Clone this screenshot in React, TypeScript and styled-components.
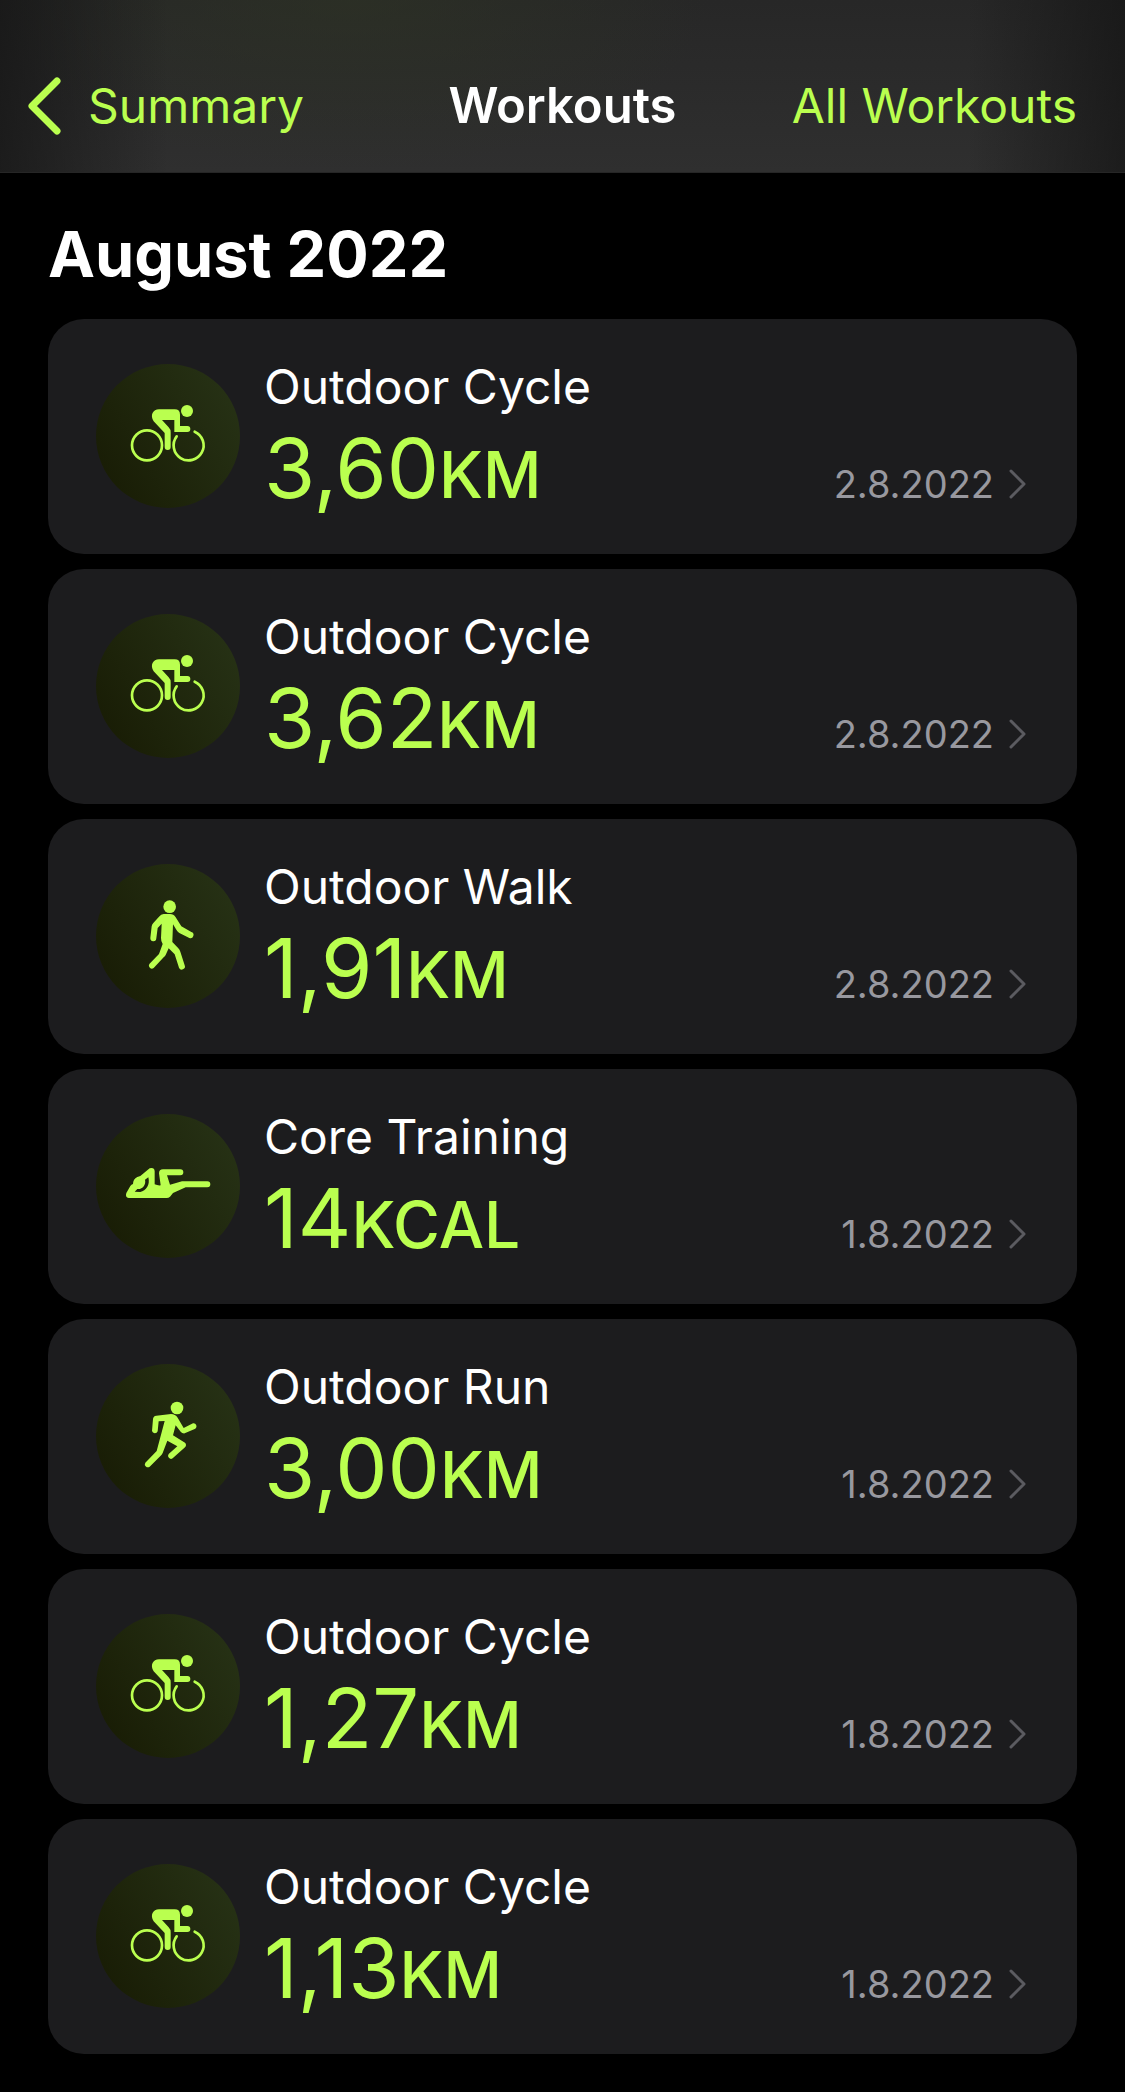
import React from "react";
import styled, { createGlobalStyle } from "styled-components";

const LIME = "#baff4f";

const GlobalStyle = createGlobalStyle`
  * {
    box-sizing: border-box;
  }
  body {
    margin: 0;
    background: #000;
    color: #fff;
    font-family: Inter, "Liberation Sans", sans-serif;
  }
`;

const NavBar = styled.header`
  display: grid;
  grid-template-columns: 1fr auto 1fr;
  align-items: center;
  padding: 74px 28px 34px;
  border-bottom: 1px solid #262626;
  background:
    linear-gradient(90deg, rgba(20, 20, 20, 0.7), rgba(20, 20, 20, 0) 15%, rgba(20, 20, 20, 0) 86%, rgba(20, 20, 20, 0.7)),
    radial-gradient(ellipse 360px 170px at 31% 0, rgba(46, 52, 36, 0.6), rgba(46, 52, 36, 0)),
    linear-gradient(180deg, #272727, #2f2f2f);
`;

const NavButton = styled.button<{ $end?: boolean }>`
  display: flex;
  align-items: center;
  justify-self: ${(p) => (p.$end ? "end" : "start")};
  gap: 26px;
  padding: ${(p) => (p.$end ? "0 20px 0 0" : "0")};
  border: 0;
  background: none;
  color: ${LIME};
  font: inherit;
  font-size: 48px;
  line-height: 64px;
  white-space: nowrap;
  cursor: pointer;
`;

const NavTitle = styled.h1`
  margin: 0;
  font-size: 49px;
  line-height: 64px;
  font-weight: 600;
`;

const Content = styled.main`
  padding: 40px 48px 38px;
`;

const MonthTitle = styled.h2`
  margin: 0 0 24px;
  font-size: 63px;
  line-height: 82px;
  font-weight: 700;
`;

const WorkoutList = styled.ul`
  display: flex;
  flex-direction: column;
  gap: 15px;
  margin: 0;
  padding: 0;
  list-style: none;
`;

const Card = styled.a`
  display: grid;
  grid-template-columns: auto 1fr auto;
  align-items: center;
  column-gap: 24px;
  padding: 32px 50px 33px 48px;
  border-radius: 36px;
  background: #1c1c1e;
  color: inherit;
  text-decoration: none;
`;

const Badge = styled.span`
  display: block;
  width: 144px;
  height: 144px;
  border-radius: 50%;
  background: linear-gradient(60deg, #171a03, #283417);
  color: ${LIME};

  svg {
    display: block;
    width: 100%;
    height: 100%;
  }
`;

const Details = styled.span`
  display: flex;
  flex-direction: column;
  height: 170px;
`;

const Name = styled.span`
  font-size: 48px;
  line-height: 72px;
`;

const Value = styled.span`
  color: ${LIME};
  font-size: 83px;
  line-height: 90px;
`;

const Unit = styled.span`
  font-size: 64px;
  font-weight: 500;
`;

const Meta = styled.span`
  display: flex;
  align-items: center;
  align-self: end;
  gap: 15px;
  padding-bottom: 13px;
  color: #98989f;
  font-size: 38px;
  line-height: 48px;
`;

const BackChevron = () => (
  <svg width="34" height="58" viewBox="0 0 34 58" fill="none" stroke="currentColor" strokeWidth="7" strokeLinecap="round" strokeLinejoin="round" aria-hidden="true">
    <path d="M29 4 4 29l25 25" />
  </svg>
);

const RowChevron = () => (
  <svg width="18" height="30" viewBox="0 0 18 30" fill="none" stroke="#5b5b60" strokeWidth="3" strokeLinecap="round" strokeLinejoin="round" aria-hidden="true">
    <path d="m2 2 13 13L2 28" />
  </svg>
);

const Glyph = ({ children }: { children: React.ReactNode }) => (
  <svg viewBox="18 12 432 432" fill="none" stroke="currentColor" strokeWidth="18" strokeLinecap="round" strokeLinejoin="round" aria-hidden="true">
    {children}
  </svg>
);

const CycleGlyph = () => (
  <Glyph>
    <circle cx="291" cy="153" r="18" fill="currentColor" stroke="none" />
    <circle cx="171" cy="256" r="45" strokeWidth="8" />
    <path d="M314 215A45 45 0 1 1 260 229" strokeWidth="8" />
    <path d="M207 148H254Q270 148 270 164V198H292A9 9 0 0 1 292 216H253V180H216L236 202Q242 208 242 217V261A9 9 0 0 1 224 261V219L191 184C179 166 189 148 207 148Z" fill="currentColor" stroke="none" />
  </Glyph>
);

const WalkGlyph = () => (
  <Glyph>
    <circle cx="239" cy="140" r="19" fill="currentColor" stroke="none" />
    <path d="M221 162H240Q251 162 257 172L274 199L304 216A9 9 0 0 1 298 234L268 219Q263 216 260 211L249 193L247 246L265 265Q269 269 271 275L284 316A9 9 0 0 1 267 323L254 283L236 265L227 285Q225 289 221 292L191 324A9 9 0 0 1 178 312L207 282L218 252Q213 245 213 234L215 191L203 204L199 235A9 9 0 0 1 181 234L185 199Q186 193 190 189L207 170Q213 163 221 162Z" fill="currentColor" stroke="none" />
  </Glyph>
);

const CoreGlyph = () => (
  <Glyph>
    <path d="M109 249L121 228Q124 224 129 222Q129 207 142 201L151 198L179 175Q193 171 194 184V223Q203 227 212 226L207 190Q207 178 219 178H271A9 9 0 0 1 271 196H231L240 224L276 214H352A9 9 0 0 1 352 232H287L249 249L240 260Q236 264 230 264H116Q105 262 109 249ZM175 202L165 209C169 224 157 239 142 237L134 245L151 246C168 243 181 225 175 202Z" fillRule="evenodd" fill="currentColor" stroke="none" />
  </Glyph>
);

const RunGlyph = () => (
  <Glyph>
    <circle cx="261" cy="144" r="19" fill="currentColor" stroke="none" />
    <path d="M199 167L243 162Q256 162 263 173L281 204L309 190A9 9 0 0 1 316 206L284 220Q277 221 272 215L257 196L249 226L285 248Q291 254 285 262L248 295A9 9 0 0 1 236 282L262 259L232 242L218 279Q216 284 212 287L179 320A9 9 0 0 1 166 308L200 273L224 183L206 184L203 214A9 9 0 0 1 186 213L189 177Q190 168 199 167Z" fill="currentColor" stroke="none" />
  </Glyph>
);

const glyphs = {
  cycle: CycleGlyph,
  walk: WalkGlyph,
  core: CoreGlyph,
  run: RunGlyph,
};

type Workout = {
  kind: keyof typeof glyphs;
  name: string;
  value: string;
  unit: string;
  date: string;
};

const workouts: Workout[] = [
  { kind: "cycle", name: "Outdoor Cycle", value: "3,60", unit: "KM", date: "2.8.2022" },
  { kind: "cycle", name: "Outdoor Cycle", value: "3,62", unit: "KM", date: "2.8.2022" },
  { kind: "walk", name: "Outdoor Walk", value: "1,91", unit: "KM", date: "2.8.2022" },
  { kind: "core", name: "Core Training", value: "14", unit: "KCAL", date: "1.8.2022" },
  { kind: "run", name: "Outdoor Run", value: "3,00", unit: "KM", date: "1.8.2022" },
  { kind: "cycle", name: "Outdoor Cycle", value: "1,27", unit: "KM", date: "1.8.2022" },
  { kind: "cycle", name: "Outdoor Cycle", value: "1,13", unit: "KM", date: "1.8.2022" },
];

const WorkoutCard = ({ workout }: { workout: Workout }) => {
  const Icon = glyphs[workout.kind];
  return (
    <Card href="#">
      <Badge>
        <Icon />
      </Badge>
      <Details>
        <Name>{workout.name}</Name>
        <Value>
          {workout.value}
          <Unit>{workout.unit}</Unit>
        </Value>
      </Details>
      <Meta>
        {workout.date}
        <RowChevron />
      </Meta>
    </Card>
  );
};

export default function App() {
  return (
    <>
      <GlobalStyle />
      <NavBar>
        <NavButton type="button">
          <BackChevron />
          Summary
        </NavButton>
        <NavTitle>Workouts</NavTitle>
        <NavButton type="button" $end>
          All Workouts
        </NavButton>
      </NavBar>
      <Content>
        <MonthTitle>August 2022</MonthTitle>
        <WorkoutList>
          {workouts.map((workout, i) => (
            <li key={i}>
              <WorkoutCard workout={workout} />
            </li>
          ))}
        </WorkoutList>
      </Content>
    </>
  );
}
